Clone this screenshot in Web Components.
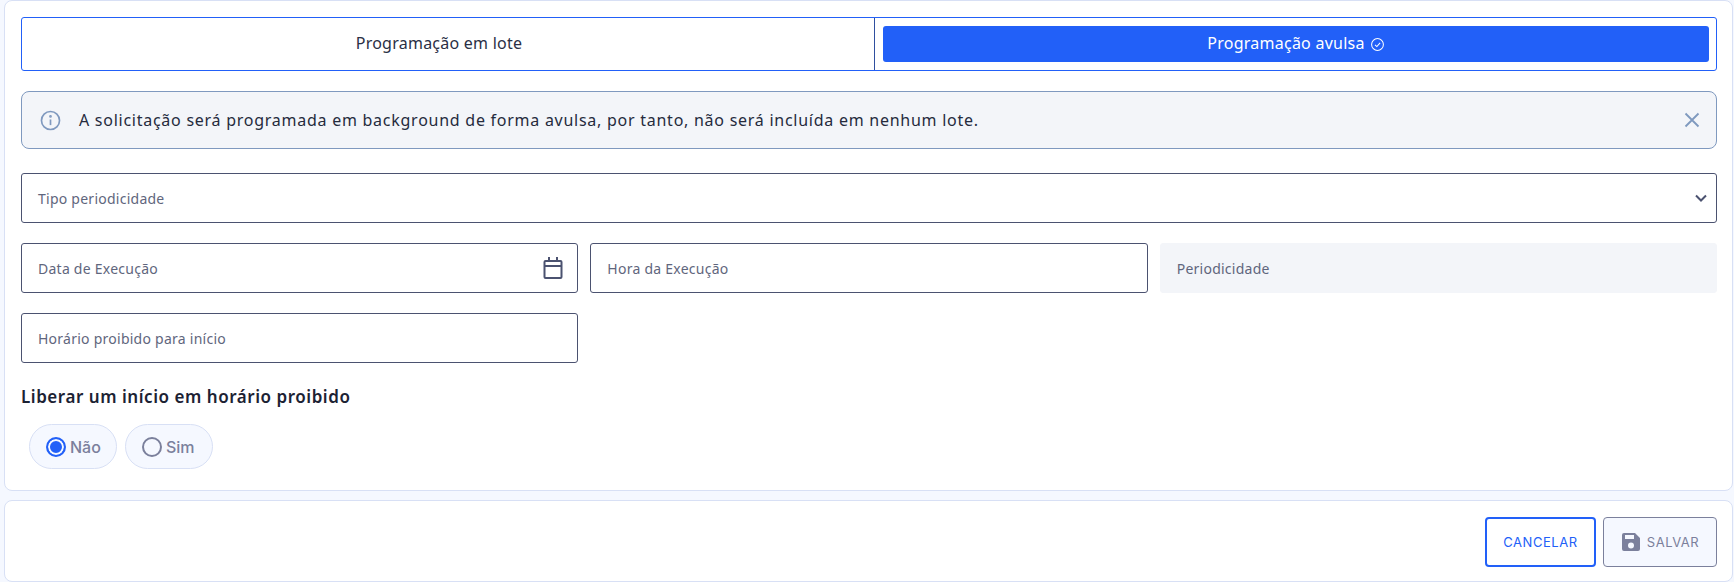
<!DOCTYPE html>
<html lang="pt">
<head>
<meta charset="utf-8">
<title>Programação</title>
<style>
    html, body { margin: 0; padding: 0; height: 100%; }
    body { background: #f5f8ff; font-family: "Noto Sans", sans-serif; overflow: hidden; }
</style>
</head>
<body>
<schedule-page></schedule-page>

<script>
class TabSwitch extends HTMLElement {
    constructor() {
        super();
        this.myRoot = this.attachShadow({ mode: "open" });
        this.myRoot.innerHTML = `
        <style>
            :host { display: grid; grid-template-columns: 852px 1fr; height: 54px; box-sizing: border-box; border: 1px solid #2260f8; border-radius: 3px; background: #fff; }
            div { display: flex; align-items: center; justify-content: center; gap: 5px; font-size: 16px; letter-spacing: .24px; color: #2a2f45; }
            .off { padding: 0 18px 2px 0; }
            .on { border-left: 1px solid #2f4f9f; padding: 8px 7px 8px 8px; }
            .on span { flex: 1; display: flex; align-items: center; justify-content: center; gap: 5px; height: 36px; padding-bottom: 2px; box-sizing: border-box; background: #2260f8; color: #fff; border-radius: 3px; }
            svg { width: 15px; height: 15px; margin-top: 2px; }
        </style>
        <div class="off">Programação em lote</div>
        <div class="on"><span>Programação avulsa
            <svg viewBox="0 0 16 16" fill="none" stroke="#fff" stroke-width="1.1"><circle cx="8" cy="8" r="6.3"/><path d="M5.3 8.3l2 1.9 3.5-4"/></svg>
        </span></div>`;
    }
}
customElements.define("tab-switch", TabSwitch);

class InfoAlert extends HTMLElement {
    constructor() {
        super();
        this.myRoot = this.attachShadow({ mode: "open" });
        this.myRoot.innerHTML = `
        <style>
            :host { display: flex; align-items: center; height: 58px; box-sizing: border-box; margin-top: 20px; padding: 0 13px 0 18px; border: 1px solid #7f99bf; border-radius: 8px; background: #f3f5f9; font-size: 16px; letter-spacing: .74px; color: #252b3d; }
            .info { width: 21px; height: 21px; margin-right: 18px; flex: none; }
            p { margin: 0; flex: 1; }
            .close { width: 22px; height: 22px; flex: none; }
        </style>
        <svg class="info" viewBox="0 0 20 20" fill="none" stroke="#7f99bf" stroke-width="1.6"><circle cx="10" cy="10" r="8.6"/><path d="M10 9v5.4"/><circle cx="10" cy="6.1" r=".5" fill="#7f99bf"/></svg>
        <p><slot></slot></p>
        <svg class="close" viewBox="0 0 22 22" fill="none" stroke="#7f99bf" stroke-width="1.8"><path d="M4.5 4.5l13 13M17.5 4.5l-13 13"/></svg>`;
    }
}
customElements.define("info-alert", InfoAlert);

class TextField extends HTMLElement {
    constructor() {
        super();
        this.myRoot = this.attachShadow({ mode: "open" });
        this.myRoot.innerHTML = `
        <style>
            :host { display: flex; align-items: center; justify-content: space-between; height: 50px; box-sizing: border-box; padding: 0 12px 0 16px; border: 1px solid #4b5270; border-radius: 3px; background: #fff; font-size: 14px; letter-spacing: .25px; color: #5f667d; }
            :host([disabled]) { border-color: #f3f5f9; background: #f3f5f9; }
            ::slotted(svg) { flex: none; }
        </style>
        <span>${this.getAttribute("label") || ""}</span>
        <slot></slot>`;
    }
}
customElements.define("text-field", TextField);

class RadioPill extends HTMLElement {
    constructor() {
        super();
        this.myRoot = this.attachShadow({ mode: "open" });
        const checked = this.hasAttribute("checked");
        this.myRoot.innerHTML = `
        <style>
            :host { display: inline-flex; align-items: center; gap: 4px; height: 45px; width: 88px; box-sizing: border-box; padding-left: 16px; border: 1px solid #d8e0f5; border-radius: 23px; background: #f5f8ff; font-family: Inter, sans-serif; font-size: 16px; font-weight: 500; color: #7b809c; }
            i { width: 20px; height: 20px; box-sizing: border-box; border-radius: 50%; border: 2px solid #7b809c; }
            i.on { border-color: #2260f8; background: #2260f8; box-shadow: inset 0 0 0 2px #f5f8ff; }
        </style>
        <i class="${checked ? "on" : ""}"></i><slot></slot>`;
    }
}
customElements.define("radio-pill", RadioPill);

class ActionButton extends HTMLElement {
    constructor() {
        super();
        this.myRoot = this.attachShadow({ mode: "open" });
        this.myRoot.innerHTML = `
        <style>
            :host { display: inline-flex; align-items: center; justify-content: center; gap: 6px; height: 50px; box-sizing: border-box; font-family: Inter, sans-serif; font-size: 13px; letter-spacing: .55px; }
            :host([variant="outline"]) { width: 111px; border: 2px solid #2260f8; border-radius: 4px; background: #fff; color: #2260f8; }
            :host([variant="disabled"]) { width: 114px; border: 1px solid #7b809c; border-radius: 4px; background: #f5f8ff; color: #7b809c; }
        </style>
        <slot name="icon"></slot><slot></slot>`;
    }
}
customElements.define("action-button", ActionButton);

class SchedulePage extends HTMLElement {
    constructor() {
        super();
        this.myRoot = this.attachShadow({ mode: "open" });
        this.myRoot.innerHTML = `
        <style>
            :host { display: flex; flex-direction: column; gap: 9px; padding-left: 4px; padding-right: 1px; }
            section { box-sizing: border-box; background: #fff; border: 1px solid #d8e0f5; border-radius: 8px; }
            .main { height: 491px; padding: 16px 15px 0 16px; }
            .grid { display: grid; grid-template-columns: repeat(3, 1fr); gap: 20px 12px; margin-top: 20px; }
            .full { grid-column: 1 / -1; margin-top: 4px; }
            .chevron { margin-right: -5px; }
            h3 { margin: 23px 0 0; font-family: "Noto Sans", sans-serif; font-size: 17px; line-height: 22px; font-weight: 600; letter-spacing: .54px; color: #1c2233; }
            .radios { display: flex; gap: 8px; margin: 16px 0 0 8px; }
            .foot { height: 82px; display: flex; justify-content: flex-end; align-items: flex-start; gap: 7px; padding: 16px 15px 0 0; }
        </style>
        <section class="main">
            <tab-switch></tab-switch>
            <info-alert>A solicitação será programada em background de forma avulsa, por tanto, não será incluída em nenhum lote.</info-alert>
            <div class="grid">
                <text-field class="full" label="Tipo periodicidade">
                    <svg class="chevron" width="16" height="16" viewBox="0 0 16 16" fill="none" stroke="#4b5270" stroke-width="2"><path d="M3 5.5l5 5 5-5"/></svg>
                </text-field>
                <text-field label="Data de Execução">
                    <svg width="24" height="24" viewBox="0 0 24 24" fill="none" stroke="#4b5270" stroke-width="2"><rect x="3.5" y="5" width="17" height="17" rx="1"/><path d="M3.5 10h17M8 1v4M16 1v4"/></svg>
                </text-field>
                <text-field label="Hora da Execução"></text-field>
                <text-field label="Periodicidade" disabled></text-field>
                <text-field label="Horário proibido para início"></text-field>
            </div>
            <h3>Liberar um início em horário proibido</h3>
            <div class="radios">
                <radio-pill checked>Não</radio-pill>
                <radio-pill>Sim</radio-pill>
            </div>
        </section>
        <section class="foot">
            <action-button variant="outline">CANCELAR</action-button>
            <action-button variant="disabled">
                <svg slot="icon" width="20" height="20" viewBox="0 0 20 20"><path fill="#7b809c" fill-rule="evenodd" d="M3 1h11l5 5v11a2 2 0 0 1-2 2H3a2 2 0 0 1-2-2V3a2 2 0 0 1 2-2zm1 2v4h9V3zm6 7.5a3 3 0 1 0 0 6 3 3 0 0 0 0-6z"/></svg>
                SALVAR
            </action-button>
        </section>`;
    }
}
customElements.define("schedule-page", SchedulePage);
</script>
</body>
</html>
